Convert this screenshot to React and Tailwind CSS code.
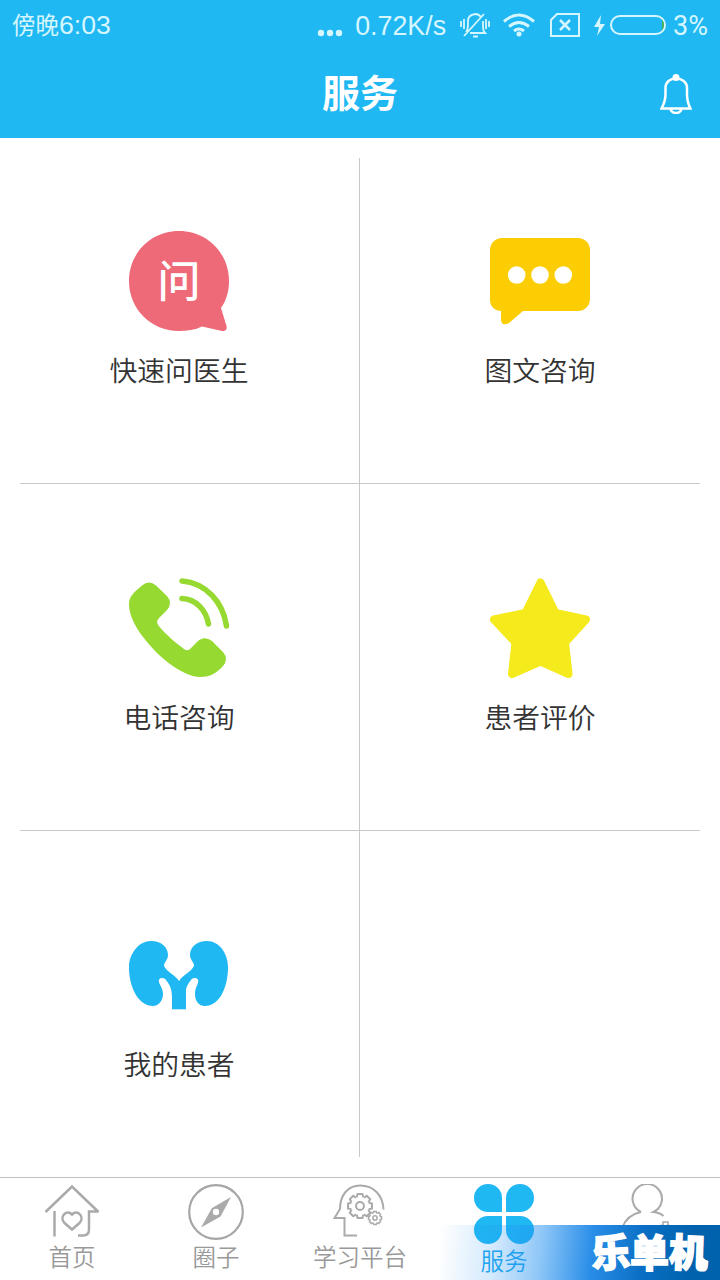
import React from 'react';

const AskIcon = () => (
    <svg width="100" height="100" viewBox="0 0 100 100">
        <path fill="#ee6a78" d="M50 0C78 0 100 22 100 50c0 11-3 20-8 27l5.500 18q1 5.500-4.500 5L73 95.500C66 99 58 100 50 100 22 100 0 78 0 50S22 0 50 0z" />
        <text x="50" y="66" textAnchor="middle" fill="#fff" fontSize="43" fontWeight="500" fontFamily="'Noto Sans CJK SC', sans-serif">问</text>
    </svg>
)

const ChatIcon = () => (
    <svg width="100" height="100" viewBox="0 0 100 100">
        <path fill="#fbcd02" d="M12 7h76a12 12 0 0 1 12 12v49a12 12 0 0 1-12 12H33L19 92q-8 4-8-4v-8Q0 79 0 68V19A12 12 0 0 1 12 7z" />
        <circle cx="26.700" cy="44" r="8.800" fill="#fff" />
        <circle cx="50" cy="44" r="8.800" fill="#fff" />
        <circle cx="73.300" cy="44" r="8.800" fill="#fff" />
    </svg>
)

const PhoneIcon = () => (
    <svg width="100" height="100" viewBox="0 0 100 100" fill="none">
        <path fill="#95d931" d="M13 7.500q7-6 14 0L38 18q6 7 0 14l-7.500 7.500q-4 4-1 8C36 56 47 65 55 71q4 3 7-1l6-6q7-7 15-1l11 11q6 7 0 14c-7 8-14 11-23 11-12 0-30-11-44-25C14 60 0 43 0 26c0-7 4-11 13-18.500z" />
        <path stroke="#95d931" strokeWidth="5.500" strokeLinecap="round" d="M53 3C77 5 94 24 97.500 48M53 20.500C67 21 77 32 79.500 46" />
    </svg>
)

const StarIcon = () => (
    <svg width="100" height="100" viewBox="0 0 100 100">
        <path fill="#f5ea1b" stroke="#f5ea1b" strokeWidth="8" strokeLinejoin="round" d="M50.500 4.500L65.500 35 96 41.500 75 64.500 78.500 96 50.500 83.500 22 96 25.500 64.500 4 41.500 35.500 35z" />
    </svg>
)

const KidneyIcon = () => (
    <svg width="100" height="100" viewBox="0 0 100 100" fill="#20b8f3">
        <path d="M22 16C32 16 39 22 39 30c0 5-4 7-4 11 3 6 10 8 15 15 5-7 12-9 15-15 0-4-4-6-4-11 0-8 7-14 17-14 13 0 22 14 21 29-1 19-9 36-23 36-7 0-10-6-10-12 0-7 4-10 3-14-1-3-6-2-7 0-5 6-6 11-6 19H43c0-8-1-13-6-19-1-2-6-3-7 0-1 4 4 7 4 14 0 6-4 12-10 12C10 81 1 64 0 45-1 30 9 16 22 16z" />
        <path d="M43 60h14v24.300H43z" />
    </svg>
)

const HomeIcon = () => (
    <svg width="56" height="56" viewBox="0 0 56 56" fill="none" stroke="#aaa" strokeWidth="2.500">
        <path d="M1.500 28L28 2.500 54.500 28M10.500 27v25.500M54.500 27.500h-9.500v18q0 6-6 6h-5" />
        <path d="M28 45.500l-7.500-6.500c-5.500-5.500 1.500-14.500 7.500-8.500 6-6 13 3 7.500 8.500z" />
    </svg>
)

const CompassIcon = () => (
    <svg width="56" height="56" viewBox="0 0 56 56" fill="none" stroke="#a6a6a6" strokeWidth="2.200">
        <circle cx="28" cy="28" r="26.800" />
        <path fill="#aaa" stroke="none" d="M43 13L32.500 32.500 13 43.500 24 24z" />
        <circle cx="28" cy="28" r="3.200" fill="#fff" stroke="none" />
    </svg>
)

const teeth = [0, 45, 90, 135, 180, 225, 270, 315]

const Gear = ({x, y, r}) => (
    <g transform={`translate(${x} ${y}) scale(${r})`}>
        {teeth.map(angle => (
            <path key={angle} transform={`rotate(${angle})`} d="M-.27-.72L-.2-1H.2L.27-.72" vectorEffect="non-scaling-stroke" />
        ))}
        <circle r=".33" vectorEffect="non-scaling-stroke" />
    </g>
)

const StudyIcon = () => (
    <svg width="56" height="56" viewBox="0 0 56 56" fill="none" stroke="#aaa" strokeWidth="2" className="-ml-0.5">
        <path d="M26 51.500H13.500V34H3.500l5.500-9C9 11 17 1.500 29 1.500c14 0 23 10 23.500 24" />
        <Gear x={29} y={22} r={12} />
        <g strokeWidth="1.500"><Gear x={44} y={34} r={6.500} /></g>
    </svg>
)

const CloverIcon = () => (
    <svg width="60" height="60" viewBox="0 0 60 60" fill="#20b8f3">
        <path d="M14 0a14 14 0 0 1 14 14v14H14A14 14 0 0 1 14 0zM46 0a14 14 0 0 1 0 28H32V14A14 14 0 0 1 46 0zM14 32h14v14a14 14 0 1 1-14-14zM32 32h14a14 14 0 1 1-14 14z" />
    </svg>
)

const UserIcon = () => (
    <svg width="56" height="56" viewBox="0 0 56 56" fill="none" stroke="#aaa" strokeWidth="2">
        <path d="M21 28a14.700 14.700 0 1 1 12.500 0q6 .5 10 4M21 28C11 30 5 36 2 44v8h40" />
        <path d="M43 42v-4h5v4M38 43l4-2M48 41l4 2" strokeWidth="1.500" />
    </svg>
)

const services = [
    {name: "快速问医生", icon: <AskIcon />, cell: "border-r border-b pr-[21px] pt-[73px]"},
    {name: "图文咨询", icon: <ChatIcon />, cell: "border-b pl-5 pt-[73px]"},
    {name: "电话咨询", icon: <PhoneIcon />, cell: "border-r border-b pr-[21px] pt-[94px]"},
    {name: "患者评价", icon: <StarIcon />, cell: "border-b pl-5 pt-[94px]"},
    {name: "我的患者", icon: <KidneyIcon />, cell: "border-r pr-[21px] pt-[94px]"},
]

const tabs = [
    {name: "首页", icon: <HomeIcon />},
    {name: "圈子", icon: <CompassIcon />},
    {name: "学习平台", icon: <StudyIcon />},
    {name: "服务", icon: <CloverIcon />, active: true},
    {name: "", icon: <UserIcon />},
]

const StatusBar = () => (
    <div className="flex h-[50px] items-center justify-between pl-3 pr-3 text-[#d5f6ff]">
        <div className="flex items-center leading-none">
            <span className="text-[23.5px]">傍晚</span>
            <span className="font-['Liberation_Sans'] text-[26.6px]">6:03</span>
        </div>
        <div className="flex items-center">
            <svg width="26" height="8" viewBox="0 0 26 8" fill="currentColor" className="mt-4 mr-3">
                <circle cx="4" cy="4" r="3.200" /><circle cx="13" cy="4" r="3.200" /><circle cx="22" cy="4" r="3.200" />
            </svg>
            <span className="mt-0.5 font-['Liberation_Sans'] text-[26.8px] leading-none">0.72K/s</span>
            <svg width="30" height="26" viewBox="0 0 30 26" fill="none" stroke="currentColor" strokeWidth="1.800" className="ml-3.5">
                <path d="M1 9v6M4 7v10M26 7v10M29 9v6M6 20q2-2 2-7V9q0-6 7-7 4 0 6 3M23 9v6q0 4 2 6H10M4 24L24 2M13 24.500h5" />
            </svg>
            <svg width="32" height="24" viewBox="0 0 32 24" fill="none" stroke="currentColor" strokeWidth="3" className="ml-[13px]">
                <path d="M1 8.500q15-13 30 0M6 13.500q10-8 20 0M11 18q5-4 10 0" />
                <circle cx="16" cy="21" r="2.500" fill="currentColor" stroke="none" />
            </svg>
            <svg width="30" height="24" viewBox="0 0 30 24" fill="none" stroke="currentColor" strokeWidth="2" className="ml-[15px]">
                <path d="M7 1h22v22H1V7z" />
                <path d="M10 7l10 10M20 7L10 17" strokeWidth="2.500" />
            </svg>
            <svg width="13" height="21" viewBox="0 0 13 21" fill="currentColor" className="ml-[13px]">
                <path d="M8 0L1 12h5L4 21l8-12H7z" />
            </svg>
            <div className="ml-1 flex h-5 w-14 items-center justify-end overflow-hidden rounded-full border-2 border-current">
                <div className="h-2.5 w-0.5 bg-[#4caf50]"></div>
            </div>
            <span className="mt-0.5 ml-[7px] font-['Roboto'] text-[27px] leading-none">3%</span>
        </div>
    </div>
)

const Header = () => (
    <div className="grid h-[88px] grid-cols-3 items-center text-white">
        <h1 className="col-start-2 mb-1.5 text-center text-[38px] leading-[82px] font-bold">服务</h1>
        <svg width="32" height="40" viewBox="0 0 32 40" fill="none" stroke="currentColor" strokeWidth="2.500" className="mr-7 justify-self-end">
            <path d="M1.500 34.500C4 30 5.500 27 5.500 20v-6C5.500 8 10 4.500 16 4.500S27 8 27 14v6c0 7 1 10 3.500 14.500zM10.500 35q1 4 5.500 4t5.500-4" />
            <circle cx="16" cy="3.500" r="3.500" fill="currentColor" stroke="none" />
        </svg>
    </div>
)

const App = () => {
    return (
        <div className="relative flex h-[1280px] w-[720px] flex-col overflow-hidden bg-white font-['Noto_Sans_CJK_SC',sans-serif]">
            <header className="h-[138px] bg-[#20b8f3]">
                <StatusBar />
                <Header />
            </header>

            <main className="grid h-[1039px] grid-cols-2 grid-rows-[326px_347px_326px] p-5">
                {services.map((service) => (
                    <div key={service.name} className={`flex flex-col items-center border-[#c8c8c8] ${service.cell}`}>
                        {service.icon}
                        <p className="mt-[18px] text-[27.8px] leading-10 font-[350] text-[#333]">{service.name}</p>
                    </div>
                ))}
            </main>

            <nav className="grid h-[103px] grid-cols-5 border-t border-[#c0c0c0]">
                {tabs.map((tab, index) => (
                    <div key={index} className="flex flex-col items-center pt-1.5">
                        {tab.icon}
                        <span className={tab.active ? "text-[23.5px] leading-8 font-[350] text-[#20a8f0]" : "text-[23.5px] leading-8 font-[350] text-[#999]"}>{tab.name}</span>
                    </div>
                ))}
            </nav>

            <div className="absolute right-0 bottom-0 flex h-[55px] w-[280px] items-center justify-end bg-[linear-gradient(95deg,#2090f000_0%,#2090f033_20%,#2090f080_36%,#2a8ee8_54%,#0a6fc4_72%,#0062ad_90%)] pr-3">
                <div className="flex pb-1 text-[39px] leading-[51px] font-black text-white [-webkit-text-stroke:1.5px_white] [stroke-linejoin:round]">
                    <span className="-rotate-3">乐</span>
                    <span>单</span>
                    <span className="rotate-2">机</span>
                </div>
            </div>
        </div>
    )
}

export default App;
